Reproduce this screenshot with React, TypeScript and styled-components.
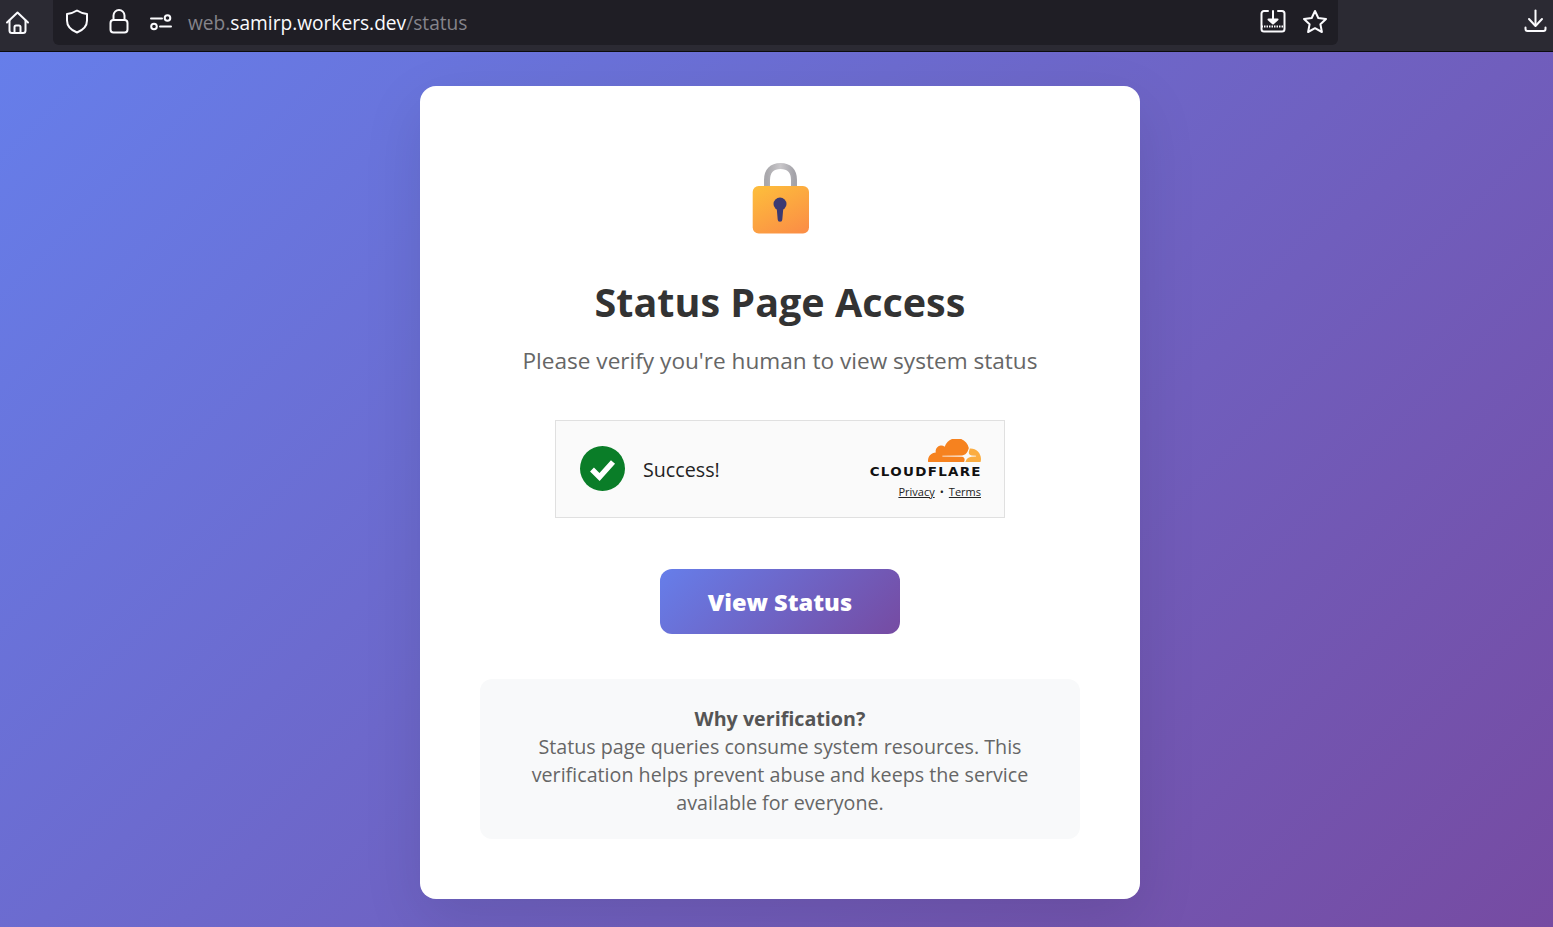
import React from "react";
import styled, { createGlobalStyle } from "styled-components";

const GlobalStyle = createGlobalStyle`
  html, body {
    margin: 0;
    padding: 0;
    height: 100%;
    overflow: hidden;
    font-family: "Open Sans", "Noto Sans", sans-serif;
  }
`;

const Toolbar = styled.header`
  display: flex;
  height: 51px;
  background: #2b2a33;
  border-bottom: 1px solid #0c0c0d;
`;

const HomeSlot = styled.div`
  width: 53px;
  display: flex;
  padding: 10px 0 0 5px;
  box-sizing: border-box;
`;

const UrlBar = styled.div`
  width: 1285px;
  height: 45px;
  background: #1f1e25;
  border-radius: 0 0 6px 6px;
  display: flex;
  align-items: flex-start;
  box-sizing: border-box;
  padding: 9px 0 0 12px;
  color: #fff;
`;

const Icon = styled.svg<{ $gap?: number }>`
  display: block;
  flex: none;
  fill: none;
  stroke: #fbfbfe;
  stroke-width: 2;
  stroke-linecap: round;
  stroke-linejoin: round;
  margin-right: ${(p) => p.$gap ?? 0}px;
`;

const UrlText = styled.div`
  font-size: 19.15px;
  line-height: 28px;
  color: #fbfbfe;
  white-space: nowrap;
  flex: 1;
  margin-left: 15px;
`;

const Dim = styled.span`
  color: #85848b;
`;

const DownloadSlot = styled.div`
  flex: 1;
  display: flex;
  justify-content: flex-end;
  padding: 9px 6px 0 0;
`;

const Page = styled.main`
  height: 875px;
  background: linear-gradient(135deg, #667eea 0%, #764ba2 100%);
  display: flex;
  justify-content: center;
  align-items: flex-start;
  padding: 34px 0 0 7px;
  box-sizing: border-box;
`;

const Card = styled.section`
  width: 720px;
  box-sizing: border-box;
  background: #fff;
  border-radius: 16px;
  padding: 60px;
  box-shadow: 0 20px 60px rgba(0, 0, 0, 0.1);
  display: flex;
  flex-direction: column;
  align-items: center;
  text-align: center;
`;

const LockArt = styled.svg`
  display: block;
  margin-top: 17px;
`;

const Title = styled.h1`
  margin: 43px 0 0;
  font-size: 39.5px;
  line-height: 48px;
  font-weight: 700;
  color: #333;
  white-space: nowrap;
`;

const Subtitle = styled.p`
  margin: 16px 0 0;
  font-size: 22.6px;
  line-height: 38px;
  color: #666;
  white-space: nowrap;
`;

const Widget = styled.div`
  margin-top: 40px;
  width: 450px;
  height: 98px;
  box-sizing: border-box;
  border: 1px solid #e0e0e0;
  background: #fafafa;
  display: flex;
  align-items: center;
  padding: 0 23px 0 24px;
  text-align: left;
`;

const CheckBadge = styled.svg`
  display: block;
  flex: none;
  margin: 0 18px 1px 0;
`;

const WidgetLabel = styled.span`
  flex: 1;
  font-size: 19.7px;
  color: #232323;
  margin-top: 1px;
`;

const Brand = styled.div`
  display: flex;
  flex-direction: column;
  align-items: flex-end;
  margin-bottom: 1px;
`;

const Wordmark = styled.div`
  font-family: "DejaVu Sans", sans-serif;
  font-weight: 700;
  font-size: 11.5px;
  line-height: 14px;
  letter-spacing: 1.1px;
  color: #111;
  margin: 2px -1px 0 0;
  transform: scaleX(1.17);
  transform-origin: right center;
`;

const BrandLinks = styled.div`
  display: flex;
  align-items: center;
  gap: 5px;
  margin-top: 5px;
  font-size: 11px;
  line-height: 15px;
  color: #232323;
`;

const BrandLink = styled.a`
  color: #232323;
  text-decoration: underline;
`;

const ViewButton = styled.button`
  margin-top: 51px;
  width: 240px;
  height: 65px;
  border: 0;
  border-radius: 12px;
  background: linear-gradient(135deg, #667eea 0%, #764ba2 100%);
  color: #fff;
  font-family: inherit;
  font-size: 23.6px;
  font-weight: 800;
`;

const InfoBox = styled.aside`
  margin-top: 45px;
  width: 600px;
  box-sizing: border-box;
  padding: 26px 24px 22px;
  border-radius: 12px;
  background: #f8f9fa;
  font-size: 19.7px;
  line-height: 28px;
  color: #666;
`;

const InfoTitle = styled.strong`
  display: block;
  font-weight: 700;
  color: #555;
`;

export default function App() {
  return (
    <>
      <GlobalStyle />
      <Toolbar>
        <HomeSlot>
          <Icon width="25" height="25" viewBox="0 0 25 25">
            <path d="M2 12.5 12.5 2.5 23 12.5" />
            <path d="M4.5 10.5V20.5a2.5 2.5 0 0 0 2.5 2.5h11a2.5 2.5 0 0 0 2.5-2.5V10.5" />
            <path d="M9.5 23v-6a1.5 1.5 0 0 1 1.5-1.5h3a1.5 1.5 0 0 1 1.5 1.5v6" />
          </Icon>
        </HomeSlot>
        <UrlBar>
          <Icon width="24" height="25" viewBox="0 0 24 25" $gap={20}>
            <path d="M12 1.5c3 2 6 3 10 3.4v6.6c0 5.5-4 9.600-10 12-6-2.400-10-6.500-10-12V4.900c4-.4 7-1.400 10-3.400z" />
          </Icon>
          <Icon width="20" height="25" viewBox="0 0 20 25" $gap={20}>
            <path d="M4.500 11V6.500a5.500 5.500 0 0 1 11 0V11" />
            <rect x="1.500" y="11" width="17" height="12.500" rx="3" />
          </Icon>
          <Icon width="24" height="25" viewBox="0 0 24 25">
            <path d="M2 9.500h11" />
            <circle cx="18.500" cy="9" r="2.800" />
            <path d="M11 17.500h11" />
            <circle cx="5" cy="17.500" r="2.800" />
          </Icon>
          <UrlText>
            <Dim>web.</Dim>samirp.workers.dev<Dim>/status</Dim>
          </UrlText>
          <Icon width="26" height="25" viewBox="0 0 26 25" $gap={16}>
            <path d="M8 2H4a2.500 2.500 0 0 0-2.500 2.500V20A2.500 2.500 0 0 0 4 22.500h18a2.500 2.500 0 0 0 2.500-2.500V4.500A2.500 2.500 0 0 0 22 2h-4" />
            <path d="M1.500 17.500h23" strokeDasharray="1.500 1" strokeLinecap="butt" />
            <path d="M13 2v10" />
            <path d="M8.500 10.500 13 14.500l4.500-4z" fill="#fbfbfe" />
          </Icon>
          <Icon width="26" height="25" viewBox="0 0 26 25" $gap={10}>
            <path d="m13 2 3.300 7 7.700 1-5.600 5.300 1.500 7.700-6.900-3.800L6.100 23l1.500-7.700L2 10l7.700-1z" />
          </Icon>
        </UrlBar>
        <DownloadSlot>
          <Icon width="23" height="24" viewBox="0 0 23 24">
            <path d="M11.500 1.500V16" />
            <path d="m5 10 6.500 7 6.500-7" />
            <path d="M1.500 18.500v1.500a2 2 0 0 0 2 2h16a2 2 0 0 0 2-2v-1.500" />
          </Icon>
        </DownloadSlot>
      </Toolbar>
      <Page>
        <Card>
          <LockArt width="60" height="72" viewBox="0 0 60 72">
            <defs>
              <linearGradient id="lockBody" x1="0.2" y1="0" x2="0.8" y2="1">
                <stop offset="0" stopColor="#fdbb3c" />
                <stop offset="1" stopColor="#fb8f45" />
              </linearGradient>
              <linearGradient id="lockShackle" x1="0" y1="0" x2="1" y2="0">
                <stop offset="0" stopColor="#a9a8ac" />
                <stop offset="0.5" stopColor="#c9c7ca" />
                <stop offset="1" stopColor="#a4a3a9" />
              </linearGradient>
            </defs>
            <path d="M17 27V17C17 8 22 3 30.500 3S44 8 44 17v10" fill="none" stroke="url(#lockShackle)" strokeWidth="6" />
            <rect x="2.700" y="23" width="56.300" height="47.500" rx="6" fill="url(#lockBody)" />
            <circle cx="30" cy="41" r="6.500" fill="#3b3a72" />
            <path d="M26.500 43h7l-1.200 13.500a2.300 2.300 0 0 1-4.600 0z" fill="#3b3a72" />
          </LockArt>
          <Title>Status Page Access</Title>
          <Subtitle>Please verify you're human to view system status</Subtitle>
          <Widget>
            <CheckBadge width="45" height="45" viewBox="0 0 45 45">
              <circle cx="22.500" cy="22.500" r="22.500" fill="#0a7d28" />
              <path d="M12 23.500 19.500 31 33 16" fill="none" stroke="#fff" strokeWidth="5.500" />
            </CheckBadge>
            <WidgetLabel>Success!</WidgetLabel>
            <Brand>
              <svg width="53" height="24" viewBox="0 7 24 10.800">
                <path
                  fill="#f6821f"
                  d="M16.5088 16.8447c.1475-.5068.0908-.9707-.1553-1.3154-.2246-.3164-.6045-.499-1.0615-.5205l-8.6592-.1123a.1559.1559 0 0 1-.1333-.0713c-.0283-.042-.0351-.0986-.021-.1553.0278-.084.1123-.1484.2036-.1562l8.7359-.1123c1.0351-.0489 2.1601-.8868 2.5537-1.9136l.499-1.3013c.0215-.0561.0293-.1128.0147-.168-.5625-2.5463-2.835-4.4453-5.5499-4.4453-2.5039 0-4.6284 1.6177-5.3876 3.8614-.4927-.3658-1.1187-.5625-1.794-.499-1.2026.119-2.1665 1.083-2.2861 2.2856-.0283.31-.0069.6128.0635.894C1.5683 13.171 0 14.7754 0 16.752c0 .1748.0142.3515.0352.5273.0141.083.0844.1475.1689.1475h15.9814c.0909 0 .1758-.0645.2032-.1553l.12-.4268z"
                />
                <path
                  fill="#fbad41"
                  d="M19.2656 11.2813c-.0771 0-.1611 0-.2383.0112-.0566 0-.1054.0415-.127.0976l-.3378 1.1744c-.1475.5068-.0918.9707.1543 1.3164.2256.3164.6055.498 1.0625.5195l1.8437.1133c.0557 0 .1055.0263.1329.0703.0283.043.0351.1074.0214.1562-.0283.084-.1132.1485-.204.1553l-1.921.1123c-1.041.0488-2.1582.8867-2.5527 1.914l-.1406.3585c-.0283.0713.0215.1416.0986.1416h6.5977c.0771 0 .1474-.0489.169-.126.1122-.4082.1757-.837.1757-1.2803 0-2.6025-2.125-4.727-4.7344-4.727"
                />
              </svg>
              <Wordmark>CLOUDFLARE</Wordmark>
              <BrandLinks>
                <BrandLink>Privacy</BrandLink>
                <span>•</span>
                <BrandLink>Terms</BrandLink>
              </BrandLinks>
            </Brand>
          </Widget>
          <ViewButton>View Status</ViewButton>
          <InfoBox>
            <InfoTitle>Why verification?</InfoTitle>
            Status page queries consume system resources. This verification helps prevent abuse and keeps the service available for everyone.
          </InfoBox>
        </Card>
      </Page>
    </>
  );
}
